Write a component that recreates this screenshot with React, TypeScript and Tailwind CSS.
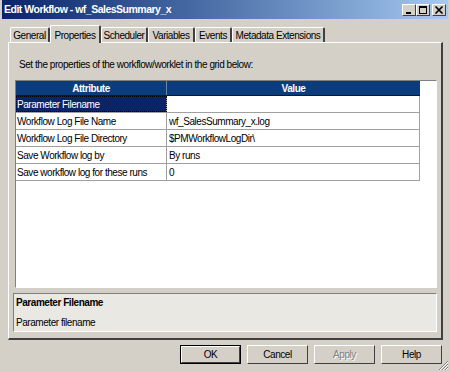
import React from 'react'

const tabs = [
  { label: 'General', w: 'w-[40px]' },
  { label: 'Properties', w: 'w-[51px]', active: true },
  { label: 'Scheduler', w: 'w-[47px]' },
  { label: 'Variables', w: 'w-[47px]' },
  { label: 'Events', w: 'w-[37px]' },
  { label: 'Metadata Extensions', w: 'w-[93px]' },
]

const rows = [
  { attr: 'Parameter Filename', value: '', selected: true },
  { attr: 'Workflow Log File Name', value: 'wf_SalesSummary_x.log' },
  { attr: 'Workflow Log File Directory', value: '$PMWorkflowLogDir\\' },
  { attr: 'Save Workflow log by', value: 'By runs' },
  { attr: 'Save workflow log for these runs', value: '0' },
]

const buttons = [
  { label: 'OK', primary: true },
  { label: 'Cancel' },
  { label: 'Apply', disabled: true },
  { label: 'Help' },
]

function CaptionButton({ kind }: { kind: 'min' | 'max' | 'close' }) {
  return (
    <div className="w-[14px] h-[12px] bg-[#D4D0C8] border border-t-white border-l-white border-r-[#404040] border-b-[#404040] flex items-center justify-center">
      <svg width="10" height="8" viewBox="0 0 10 8">
        {kind === 'min' && <rect x="2" y="6" width="5" height="2" fill="#000" />}
        {kind === 'max' && (
          <>
            <rect x="1.5" y="0.5" width="7" height="7" fill="none" stroke="#000" strokeWidth="1" />
            <rect x="1" y="0.5" width="8" height="1.5" fill="#000" />
          </>
        )}
        {kind === 'close' && (
          <path d="M1.5 0.5 L8.5 7.5 M8.5 0.5 L1.5 7.5" stroke="#000" strokeWidth="1.6" />
        )}
      </svg>
    </div>
  )
}

export default function App() {
  return (
    <div
      className="w-[450px] h-[372px] bg-[#D4D0C8] text-[10px] tracking-[-0.45px] text-black overflow-hidden flex flex-col px-[2px] relative whitespace-nowrap"
      style={{ fontFamily: '"Liberation Sans", Arial, sans-serif' }}
    >
      {/* title bar */}
      <div className="h-[19px] shrink-0 bg-gradient-to-r from-[#0A246A] to-[#A6CAF0] flex items-center pl-[2px] pr-[2px]">
        <span className="text-white font-bold text-[10.5px] tracking-[-0.5px] flex-1 leading-none">Edit Workflow - wf_SalesSummary_x</span>
        <div className="flex items-center">
          <CaptionButton kind="min" />
          <CaptionButton kind="max" />
          <div className="w-[2px]" />
          <CaptionButton kind="close" />
        </div>
      </div>

      {/* tabs */}
      <div className="mt-[5px] h-[18px] flex items-end pl-[8px] shrink-0">
        {tabs.map((t) =>
          t.active ? (
            <div
              key={t.label}
              className={`${t.w} h-[18px] -mb-px relative z-10 bg-[#D4D0C8] border-l border-t border-white border-r-2 border-r-[#404040] flex items-start justify-center pt-[2px] rounded-t-[2px]`}
            >
              {t.label}
            </div>
          ) : (
            <div
              key={t.label}
              className={`${t.w} h-[15px] border-l border-t border-white border-r-2 border-r-[#404040] flex items-center justify-center rounded-t-[2px]`}
            >
              {t.label}
            </div>
          )
        )}
      </div>

      {/* panel */}
      <div className="ml-[6px] w-[435px] h-[298px] shrink-0 border-l border-t border-white border-r-2 border-b-2 border-r-[#404040] border-b-[#404040] flex flex-col">
        <div className="h-[37px] flex items-end pb-[10px] pl-[10px] leading-none">
          Set the properties of the workflow/worklet in the grid below:
        </div>
        {/* grid */}
        <div className="ml-[6px] w-[422px] h-[208px] bg-white border-l border-t border-[#808080] border-r border-b border-r-white border-b-white">
          <div className="w-[404px]">
            <div className="h-[15px] flex bg-[#0B3D7D] text-white font-bold border-b border-[#001A40]">
              <div className="w-[151px] flex items-center justify-center border-r border-[#6A86AC]">Attribute</div>
              <div className="flex-1 flex items-center justify-center">Value</div>
            </div>
            {rows.map((r) => (
              <div key={r.attr} className="h-[17px] flex border-b border-[#A0A0A0]">
                <div
                  className={`w-[151px] flex items-center pl-[1px] border-r border-[#A0A0A0] ${
                    r.selected ? 'bg-[#0A2468] text-white outline-1 outline-dotted outline-black -outline-offset-1' : ''
                  }`}
                >
                  {r.attr}
                </div>
                <div className="flex-1 flex items-center pl-[2px] border-r border-[#A0A0A0]">{r.value}</div>
              </div>
            ))}
          </div>
        </div>
        {/* description */}
        <div className="ml-[4px] mt-[5px] w-[424px] h-[39px] bg-[#EAE8E3] border-l border-t border-[#808080] border-r border-b border-r-white border-b-white px-[2px] flex flex-col">
          <div className="font-bold mt-[2px] leading-[13px]">Parameter Filename</div>
          <div className="mt-[7px] leading-[13px]">Parameter filename</div>
        </div>
      </div>

      {/* buttons */}
      <div className="flex justify-end gap-[6px] mt-[5px] pr-[6px]">
        {buttons.map((b) => (
          <div
            key={b.label}
            className={`w-[61px] h-[19px] flex items-center justify-center ${
              b.primary ? 'border border-black' : ''
            }`}
          >
            <div
              className={`w-full h-full bg-[#D4D0C8] border border-t-white border-l-white border-r-[#404040] border-b-[#404040] flex items-center justify-center ${
                b.disabled ? 'text-[#808080] [text-shadow:1px_1px_0_#fff]' : ''
              }`}
            >
              {b.label}
            </div>
          </div>
        ))}
      </div>

      {/* resize grip */}
      <svg className="absolute right-[1px] bottom-[1px]" width="11" height="11" viewBox="0 0 11 11">
        <path d="M10 1 L1 10 M10 4 L4 10 M10 7 L7 10" stroke="#808080" strokeWidth="1" />
        <path d="M10 2 L2 10 M10 5 L5 10 M10 8 L8 10" stroke="#fff" strokeWidth="1" />
      </svg>
    </div>
  )
}
